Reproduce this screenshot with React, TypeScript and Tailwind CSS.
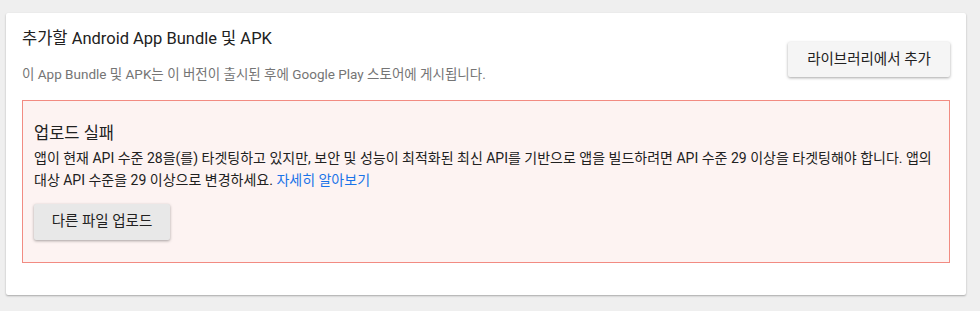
export default function App() {
  return (
    <div className="h-[311px] w-[980px] bg-[#efefef] pl-[6px] pt-[13px] font-['Roboto','Noto_Sans_CJK_KR',sans-serif]">
      <div className="h-[282px] w-[960px] rounded-[2px] bg-white px-4 pt-[14px] shadow-[0_1px_2px_rgba(0,0,0,0.3)]">
        <div className="flex h-[55px] items-start justify-between">
          <div>
            <h2 className="text-[16.5px] leading-6 text-[#212121]">추가할 Android App Bundle 및 APK</h2>
            <p className="mt-[13px] text-[13.5px] leading-5 text-[#757575]">
              이 App Bundle 및 APK는 이 버전이 출시된 후에 Google Play 스토어에 게시됩니다.
            </p>
          </div>
          <button className="mt-[15px] h-[35px] w-[162px] shrink-0 rounded-[2px] bg-[#f5f5f5] text-[14.5px] text-[#212121] shadow-[0_1px_3px_rgba(0,0,0,0.35)]">
            라이브러리에서 추가
          </button>
        </div>
        <div className="mt-[18px] h-[163px] w-[928px] border border-[#f28b82] bg-[#fdf3f2] px-[11px] pt-[21px]">
          <h3 className="text-[16.5px] leading-6 text-[#212121]">업로드 실패</h3>
          <p className="mt-px break-keep text-[14px] leading-[22px] text-[#212121]">
            앱이 현재 API 수준 28을(를) 타겟팅하고 있지만, 보안 및 성능이 최적화된 최신 API를 기반으로 앱을 빌드하려면 API 수준 29 이상을 타겟팅해야 합니다. 앱의 대상 API 수준을 29 이상으로 변경하세요.{' '}
            <a className="text-[#1a73e8]">자세히 알아보기</a>
          </p>
          <button className="mt-[13px] h-[36px] w-[136px] rounded-[2px] bg-[#e8e8e8] text-[14.5px] text-[#212121] shadow-[0_1px_3px_rgba(0,0,0,0.35)]">
            다른 파일 업로드
          </button>
        </div>
      </div>
    </div>
  );
}
